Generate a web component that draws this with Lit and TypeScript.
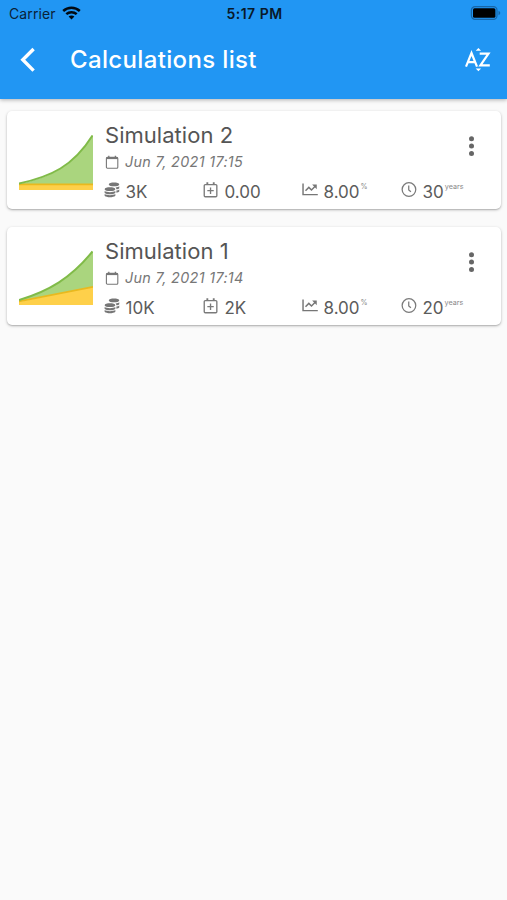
import { LitElement, html, css, svg } from "lit";
import { customElement, property } from "lit/decorators.js";

interface Simulation {
  name: string;
  date: string;
  initial: string;
  monthly: string;
  rate: string;
  years: string;
  growth: string;
  growthLine: string;
  paid: string;
  paidLine: string;
}

const simulations: Simulation[] = [
  {
    name: "Simulation 2", date: "Jun 7, 2021 17:15",
    initial: "3K", monthly: "0.00", rate: "8.00", years: "30",
    growth: "M0 50C32 43 54 33 74 1V51H0Z", growthLine: "M0 49.5C32 42.5 54 32.5 73.5 1.5",
    paid: "M0 50H74V56H0Z", paidLine: "M0 50.4H74",
  },
  {
    name: "Simulation 1", date: "Jun 7, 2021 17:14",
    initial: "10K", monthly: "2K", rate: "8.00", years: "20",
    growth: "M0 50C30 41 52 29 74 1V38L0 52Z", growthLine: "M0 50C30 41 52 28 73.5 1.5",
    paid: "M0 52L74 37V55H0Z", paidLine: "M0 51.4L74 36.8",
  },
];

const coins = svg`
  <g fill="#767676">
    <path d="M4.600 2.300C4.600 -.1 14.800 -.1 14.800 2.300S4.600 4.700 4.600 2.300Z"/>
    <path d="M11.200 5.200C13 5 14.200 4.600 14.800 4V6C14.300 6.600 13 7 12 7.100C11.900 6.300 11.700 5.700 11.200 5.200Z"/>
    <path d="M12 8.300C13.200 8.100 14.200 7.800 14.800 7.200V9.200C14.300 9.800 13 10.200 12 10.300Z"/>
    <path d="M.6 6.900C.6 4.500 11 4.500 11 6.900S.6 9.300 .6 6.900Z"/>
    <path d="M.6 8.700C2.500 10.200 9 10.200 11 8.700V10.600C9 12.300 2.500 12.300 .6 10.600Z"/>
    <path d="M.6 11.700C2.500 13.200 9 13.200 11 11.700V13.400C9 15.300 2.500 15.300 .6 13.400Z"/>
  </g>`;
const calendarPlus = svg`
  <g fill="none" stroke="#7a7a7a" stroke-width="1.300">
    <rect x="1.200" y="2.500" width="12.200" height="11.800" rx="1"/>
    <path d="M4.200 .3V2.600M10.400 .3V2.600" stroke-width="1.800"/>
    <path d="M7.300 5.300V11.500M4.200 8.400H10.400"/>
  </g>`;
const chart = svg`
  <g fill="none" stroke="#767676" stroke-width="1.400">
    <path d="M1 1.500V12.200H15.300"/>
    <path d="M3.400 8.400L6.600 5.200L9.200 7.800L12.800 4.200"/>
    <path d="M9.800 2.500H14.300V7Z" fill="#767676" stroke="none"/>
  </g>`;
const clock = svg`
  <g fill="none" stroke="#7a7a7a" stroke-width="1.200">
    <circle cx="7.700" cy="7.300" r="6.600"/>
    <path d="M7.500 3.300V7.600L9.600 9.500"/>
  </g>`;

@customElement("status-bar")
class StatusBar extends LitElement {
  static styles = css`
    :host { display: grid; grid-template-columns: 1fr auto 1fr; align-items: center; height: 26px; padding: 0 6px 0 9px; box-sizing: border-box; color: #0a2238; font-size: 14px; }
    .carrier { display: flex; align-items: center; gap: 6px; letter-spacing: 0.1px; }
    .time { font-weight: 600; font-size: 14px; letter-spacing: 0.5px; color: #08192a; margin-right: 1px; }
    .battery { justify-self: end; }
    svg { display: block; }
  `;
  render() {
    return html`
      <div class="carrier"><span>Carrier</span>
        <svg width="19" height="14" viewBox="0 0 19 14" fill="none" stroke="#020a12" stroke-width="2.500">
          <path d="M1.200 5C5.800 .7 13.200 .7 17.800 5"/>
          <path d="M4.300 8.200C7.200 5.500 11.800 5.500 14.700 8.200"/>
          <path d="M6.600 10.500C8.200 9 10.800 9 12.400 10.500L9.500 13.500Z" fill="#020a12" stroke="none"/>
        </svg>
      </div>
      <div class="time">5:17 PM</div>
      <svg class="battery" width="31" height="14" viewBox="0 0 31 14">
        <rect x="1.400" y=".7" width="25.600" height="12.600" rx="3.600" fill="none" stroke="#1766a8" stroke-width="1.200"/>
        <rect x="3" y="2.300" width="22.400" height="9.400" rx="1.500" fill="#000"/>
        <path d="M28.500 4.800C30.800 5.600 30.800 8.400 28.500 9.200Z" fill="#1766a8"/>
      </svg>`;
  }
}

@customElement("simulation-card")
class SimulationCard extends LitElement {
  @property({ attribute: false }) item!: Simulation;
  static styles = css`
    :host { display: flex; height: 98px; box-sizing: border-box; padding-left: 12px; background: #fff; border-radius: 5px; box-shadow: 0 1px 3px rgba(0,0,0,.26), 0 1px 1px rgba(0,0,0,.1); color: #555; }
    svg { display: block; flex: none; }
    .graph { margin: 23px 12px 0 0; }
    .body { flex: 1; min-width: 0; }
    .head { display: flex; justify-content: space-between; height: 64px; }
    .name { height: 28px; line-height: 28px; padding-top: 10px; font-size: 22px; letter-spacing: 0.03px; }
    .date { display: flex; align-items: center; gap: 6px; height: 25px; font-size: 14.400px; letter-spacing: 0.32px; font-style: italic; color: #777; }
    .more { margin: 23px 24px 0 0; }
    .stats { display: grid; grid-template-columns: repeat(4, 99px); height: 34px; }
    .stat { display: flex; height: 34px; align-items: center; gap: 5.500px; font-size: 17px; color: #5c5c5c; margin-left: -1px; }
    .stat svg { margin-bottom: 4px; }
    .unit { align-self: flex-start; margin: 8px 0 0 -4.500px; font-size: 7.200px; line-height: 8px; color: #888; }
  `;
  stat(icon: unknown, value: string, unit = "") {
    return html`<div class="stat">
      <svg width="16" height="15.500" viewBox="0 0 15.500 15">${icon}</svg>
      <span>${value}</span>${unit ? html`<span class="unit">${unit}</span>` : null}
    </div>`;
  }
  render() {
    const s = this.item;
    return html`
      <svg class="graph" width="74" height="57" viewBox="0 0 74 57">
        <path d=${s.growth} fill="#aad57e"/>
        <path d=${s.paid} fill="#fed04a"/>
        <path d=${s.paidLine} fill="none" stroke="#e9b91e" stroke-width="1.800"/>
        <path d=${s.growthLine} fill="none" stroke="#80bb48" stroke-width="2"/>
      </svg>
      <div class="body">
        <div class="head">
          <div>
            <div class="name">${s.name}</div>
            <div class="date">
              <svg width="14" height="14" viewBox="0 0 14 14" fill="none" stroke="#777">
                <rect x="1.400" y="2.400" width="11.400" height="10.800" rx="1" stroke-width="1.100"/>
                <path d="M1.400 3.200H12.800" stroke-width="1.800"/>
                <path d="M3.800 .7V3M10.400 .7V3" stroke-width="1.300"/>
              </svg>
              <span>${s.date}</span>
            </div>
          </div>
          <svg class="more" width="12" height="24" viewBox="0 0 12 24" fill="#666">
            <circle cx="6.500" cy="4.700" r="2.500"/><circle cx="6.500" cy="12.100" r="2.500"/><circle cx="6.500" cy="19.500" r="2.500"/>
          </svg>
        </div>
        <div class="stats">
          ${this.stat(coins, s.initial)}${this.stat(calendarPlus, s.monthly)}
          ${this.stat(chart, s.rate, "%")}${this.stat(clock, s.years, "years")}
        </div>
      </div>`;
  }
}

@customElement("app-root")
class AppRoot extends LitElement {
  static styles = css`
    :host { display: block; height: 900px; background: #fafafa; font-family: Inter, "Liberation Sans", sans-serif; }
    header { height: 98.500px; background: #2196f3; box-shadow: 0 1px 4px rgba(0,0,0,.3); }
    .bar { display: flex; align-items: center; height: 68px; padding: 0 15px 0 20px; color: #fff; }
    .title { flex: 1; margin-left: 32px; font-size: 24px; letter-spacing: 0.35px; font-weight: 500; line-height: 30px; }
    .list { display: flex; flex-direction: column; gap: 18px; padding: 12.500px 6px 0 7px; }
    svg { display: block; }
  `;
  render() {
    return html`
      <header>
        <status-bar></status-bar>
        <div class="bar">
          <svg width="18" height="26" viewBox="0 0 18 26" fill="none" stroke="#fff" stroke-width="3.400"><path d="M13.600 2L2.800 12.800L13.600 23.600"/></svg>
          <div class="title">Calculations list</div>
          <svg width="27" height="26" viewBox="0 0 27 26" fill="#fff">
            <path d="M10.700 3.700L13.400 1L16.100 3.700ZM10.700 21.500H16.100L13.400 24.200Z"/>
            <path d="M1 19.600L6.500 6L12 19.600M3 15.200H10M14.700 6.600H23.500L15.400 18.400H24.800" fill="none" stroke="#fff" stroke-width="2.200"/>
          </svg>
        </div>
      </header>
      <div class="list">
        ${simulations.map((s) => html`<simulation-card .item=${s}></simulation-card>`)}
      </div>`;
  }
}
